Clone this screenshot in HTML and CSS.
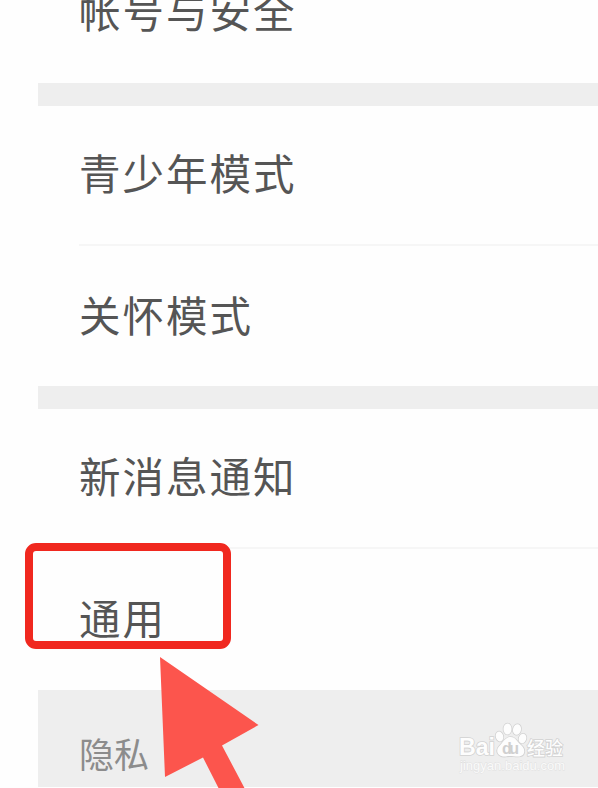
FILE: index.html
```
<!DOCTYPE html>
<html lang="zh-CN">
	<head>
		<meta charset="UTF-8">
		<title>设置</title>
		<link rel="stylesheet" href="styles.css">
	</head>
	<body>
		
		<div class="settings">
			
			<ul class="group account">
				<li class="item">帐号与安全</li>
			</ul>
			
			<ul class="group">
				<li class="item">青少年模式</li>
				<li class="item">关怀模式</li>
			</ul>
			
			<ul class="group">
				<li class="item">新消息通知</li>
				<li class="item">通用</li>
			</ul>
			
			<div class="section-title">隐私</div>
			
		</div>
		
		<!--红色选框-->
		<div class="mark-box"></div>
		
		<!--箭头-->
		<svg class="arrow" width="102" height="132" viewBox="0 0 102 132">
			<path d="M0 0 L98.500 68 L62 88.500 L85 132 L59 132 L43 100.500 L5 120 Z" fill="#fc554d"/>
		</svg>
		
		<!--水印-->
		<svg class="watermark" width="116" height="60" viewBox="0 0 116 60">
			<g class="logo">
				<text class="brand" x="3" y="36" textLength="36" lengthAdjust="spacingAndGlyphs">Bai</text>
				<ellipse cx="43.500" cy="17.500" rx="3.700" ry="5" transform="rotate(-15 43.500 17.500)"/>
				<ellipse cx="51.500" cy="10" rx="4" ry="5.500"/>
				<ellipse cx="61" cy="10.500" rx="4" ry="5.300" transform="rotate(12 61 10.500)"/>
				<ellipse cx="66.500" cy="19.500" rx="3.700" ry="4.900" transform="rotate(20 66.500 19.500)"/>
				<path d="M54.500 18 C60 18 61 23 65 26 C70 30 69.500 37.500 62 37.500 C57 37.500 54 36.500 50 37.500 C42 38.500 39 32 43 27.500 C47 24 49 18 54.500 18 Z"/>
				<text class="cn" x="71" y="36" textLength="36">经验</text>
			</g>
			<text class="du" x="46" y="34.500" textLength="17">du</text>
			<text class="url" x="4" y="51" textLength="105">jingyan.baidu.com</text>
		</svg>
		
	</body>
</html>
```
FILE: styles.css
```
*{
	margin: 0;
	padding: 0;
}


body{
	height: 788px;
	position: relative;
	overflow: hidden;
	background-color: #fefefe;
	font-family: "Noto Sans CJK SC", sans-serif;
}


.settings{
	margin-left: 38px;
}


.group{
	list-style: none;
	border-bottom: 23px solid #eee;
}


.item{
	height: 138px;
	padding-left: 41px;
	line-height: 133px;
	font-size: 41.500px;
	letter-spacing: 2px;
	color: #555;
}


/*两行之间的分隔线*/
.item + .item{
	height: 142px;
	line-height: 140px;
	position: relative;
}

.item + .item::before{
	content: "";
	position: absolute;
	top: 0;
	left: 41px;
	right: 0;
	height: 2px;
	background-color: #f6f6f6;
}


/*第一行只露出下半部分*/
.account .item{
	height: 83px;
	line-height: 20px;
}


.group:nth-child(3){
	border-bottom: 0;
}


.section-title{
	height: 97px;
	margin-top: 1px;
	padding-left: 41px;
	line-height: 125px;
	font-size: 35px;
	color: #8c8c8c;
	background-color: #eee;
}


.mark-box{
	position: absolute;
	left: 25px;
	top: 543px;
	width: 190px;
	height: 90px;
	border: 8px solid #f0281f;
	border-radius: 11px;
}


.arrow{
	position: absolute;
	left: 160px;
	top: 657px;
}


.watermark{
	position: absolute;
	left: 456px;
	top: 719px;
}


.logo{
	fill: #fdfdfd;
	stroke: #d2d2d2;
	stroke-width: 1.600px;
	paint-order: stroke;
}


.brand{
	font-family: "Liberation Sans", sans-serif;
	font-size: 24px;
	font-weight: bold;
}


.cn{
	font-size: 18px;
	font-weight: 500;
}


.du{
	font-family: "Liberation Sans", sans-serif;
	font-size: 16px;
	font-weight: bold;
	fill: #d0d0d0;
}


.url{
	font-family: "Liberation Sans", sans-serif;
	font-size: 13px;
	fill: #fafafa;
	stroke: #e0e0e0;
	stroke-width: 0.800px;
	paint-order: stroke;
}
```
